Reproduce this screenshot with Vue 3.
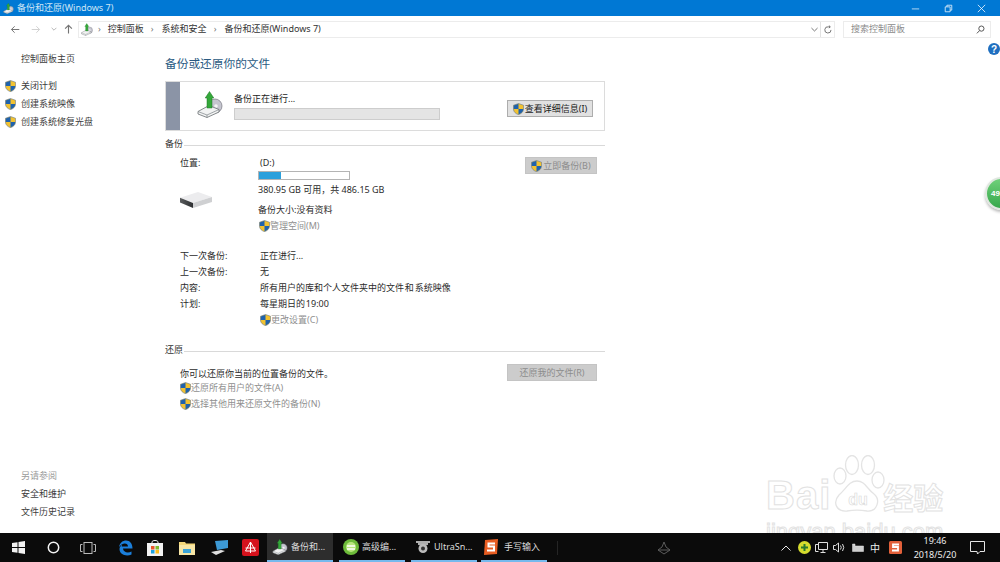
<script setup>
const sideLinks = ['关闭计划', '创建系统映像', '创建系统修复光盘']
const crumbs = ['控制面板', '系统和安全', '备份和还原(Windows 7)']
const scheduleRows = [
  ['下一次备份:', '正在进行...'],
  ['上一次备份:', '无'],
  ['内容:', '所有用户的库和个人文件夹中的文件 和 系统映像'],
  ['计划:', '每星期日的 19:00'],
]
const tasks = [
  { name: '备份和...', icon: 'backup', active: true },
  { name: '高级编...', icon: 'ball' },
  { name: 'UltraSn...', icon: 'drone' },
  { name: '手写输入', icon: 'sogou' },
]
</script>

<template>
  <div class="screen">
    <svg class="defs" width="0" height="0" aria-hidden="true">
      <defs>
        <linearGradient id="driveFront" x1="0" y1="0" x2="1" y2="0">
          <stop offset="0" stop-color="#5a5c5e" />
          <stop offset="1" stop-color="#2e3032" />
        </linearGradient>
      </defs>
      <symbol id="shield" viewBox="0 0 12 13">
        <path d="M6 .5 11.500 2.400V6.600C11.500 9.700 9 11.600 6 12.700 3 11.600 .5 9.700 .5 6.600V2.400Z" fill="#f2c230" stroke="#5b6f8c" stroke-width=".6" />
        <path d="M6 .8V6.500H.8V2.600ZM6 6.500H11.200C11.100 9.500 8.800 11.400 6 12.400Z" fill="#1f62ad" />
      </symbol>
      <symbol id="backup" viewBox="0 0 26 27">
        <ellipse cx="18" cy="15" rx="7" ry="7" fill="#c5c5cf" stroke="#75757f" stroke-width=".7" />
        <circle cx="19" cy="15" r="1.800" fill="#f4f4f4" />
        <path d="M1 20.500 12 14.500 22 18.500V21L10 26.500 1 23Z" fill="#f2f3f3" stroke="#6a6f72" stroke-width=".8" />
        <path d="M1 20.500 10 24 22 18.500M10 24V26.500" fill="none" stroke="#7d8488" stroke-width=".7" />
        <path d="M12.500 .5 16.800 7H15V17H10V7H8.200Z" fill="#34a83a" stroke="#1e7425" stroke-width=".5" />
      </symbol>
    </svg>

    <header class="titlebar">
      <div class="title">
        <svg class="title-icon"><use href="#backup" /></svg>
        <span>备份和还原(Windows 7)</span>
      </div>
      <div class="window-controls">
        <svg width="9" height="9" viewBox="0 0 11 11"><path d="M1 6H10" stroke="#d5e8f7" /></svg>
        <svg width="9" height="9" viewBox="0 0 11 11" fill="none" stroke="#e8f3fb"><path d="M1.500 3.500H7.500V9.500H1.500ZM3.500 3.500V1.500H9.500V7.500H7.500" /></svg>
        <svg width="9" height="9" viewBox="0 0 11 11" fill="none" stroke="#f0f7fc"><path d="M1 1 10 10M10 1 1 10" /></svg>
      </div>
    </header>

    <nav class="navbar">
      <div class="nav-buttons">
        <svg class="n-back" width="10" height="9" viewBox="0 0 14 12" fill="none" stroke="#767676" stroke-width="1.400"><path d="M13 6H2M6.500 1.500 2 6 6.500 10.500" /></svg>
        <svg class="n-fwd" width="10" height="9" viewBox="0 0 14 12" fill="none" stroke="#d2d2d2" stroke-width="1.400"><path d="M1 6H12M7.500 1.500 12 6 7.500 10.500" /></svg>
        <svg class="n-down" width="6" height="4" viewBox="0 0 7 5" fill="none" stroke="#a5a5a5"><path d="M.5 1 3.500 4 6.500 1" /></svg>
        <svg class="n-up" width="9" height="10" viewBox="0 0 12 13" fill="none" stroke="#747474" stroke-width="1.500"><path d="M6 12.500V1.500M1.500 6 6 1.500 10.500 6" /></svg>
      </div>
      <div class="address">
        <svg class="address-icon"><use href="#backup" /></svg>
        <span class="crumb-sep first">›</span>
        <template v-for="(crumb, i) in crumbs" :key="crumb">
          <span class="crumb">{{ crumb }}</span>
          <span v-if="i < crumbs.length - 1" class="crumb-sep">›</span>
        </template>
        <div class="address-tools">
          <svg width="7" height="5" viewBox="0 0 8 5" fill="none" stroke="#666"><path d="M.5 .8 4 4.200 7.500 .8" /></svg>
          <i class="tool-divider"></i>
          <svg width="8" height="9" viewBox="0 0 9 10" fill="none" stroke="#666"><path d="M7.900 5.500A3.500 3.500 0 1 1 5 2H7M5.500 .5 7 2 5.500 3.500" /></svg>
        </div>
      </div>
      <div class="search">
        <span>搜索控制面板</span>
        <svg width="9" height="9" viewBox="0 0 10 10" fill="none" stroke="#555" stroke-width="1.100"><circle cx="6" cy="4" r="2.900" /><path d="M4 6.200 1 9.300" /></svg>
      </div>
    </nav>

    <div class="body">
      <aside class="sidebar">
        <div>
          <div class="side-home">控制面板主页</div>
          <ul class="side-links">
            <li v-for="link in sideLinks" :key="link">
              <svg class="shield"><use href="#shield" /></svg>{{ link }}
            </li>
          </ul>
        </div>
        <div class="see-also">
          <div class="see-title">另请参阅</div>
          <div>安全和维护</div>
          <div>文件历史记录</div>
        </div>
      </aside>

      <main class="main">
        <h1>备份或还原你的文件</h1>

        <section class="status">
          <div class="stripe"></div>
          <svg class="status-icon"><use href="#backup" /></svg>
          <div class="status-text">
            <div class="status-line">备份正在进行...</div>
            <div class="status-bar"></div>
          </div>
          <button class="btn btn-on">
            <svg class="shield"><use href="#shield" /></svg>查看详细信息(I)
          </button>
        </section>

        <div class="group-head"><span>备份</span><i></i></div>

        <div class="location">
          <div class="loc-left">
            <div>位置:</div>
            <svg class="drive" width="32" height="18" viewBox="0 0 32 18">
              <path d="M0 6.700 18 1 32 6 13 12Z" fill="#ececee" />
              <path d="M0 6.700 13 12V17L0 11.500Z" fill="url(#driveFront)" />
              <path d="M13 12 32 6V11L13 17Z" fill="#cfd0d2" />
            </svg>
          </div>
          <div class="loc-mid">
            <div class="drive-name">(D:)</div>
            <div class="usage"><div class="usage-fill" :style="{ width: '24%' }"></div></div>
            <div>380.95 GB 可用，共 486.15 GB</div>
            <div class="size-line">备份大小:没有资料</div>
            <div class="link manage"><svg class="shield"><use href="#shield" /></svg>管理空间(M)</div>
          </div>
          <button class="btn btn-off btn-now">
            <svg class="shield"><use href="#shield" /></svg>立即备份(B)
          </button>
        </div>

        <dl class="schedule">
          <template v-for="row in scheduleRows" :key="row[0]">
            <dt>{{ row[0] }}</dt>
            <dd>{{ row[1] }}</dd>
          </template>
          <dt></dt>
          <dd class="link"><svg class="shield"><use href="#shield" /></svg>更改设置(C)</dd>
        </dl>

        <div class="group-head restore-head"><span>还原</span><i></i></div>

        <div class="restore">
          <div>
            <div class="restore-note">你可以还原你当前的位置备份的文件。</div>
            <div class="link"><svg class="shield"><use href="#shield" /></svg>还原所有用户的文件(A)</div>
            <div class="link"><svg class="shield"><use href="#shield" /></svg>选择其他用来还原文件的备份(N)</div>
          </div>
          <button class="btn btn-off btn-restore">还原我的文件(R)</button>
        </div>
      </main>

      <div class="watermark">
        <div class="wm-logo">
          <span class="wm-bai">Bai</span>
          <svg class="wm-paw" width="56" height="58" viewBox="0 0 56 58" fill="#fff" stroke="#e4e4e4" stroke-width="1.300">
            <ellipse cx="11" cy="21" rx="6" ry="8" />
            <ellipse cx="23" cy="10" rx="6.500" ry="9.500" />
            <ellipse cx="39" cy="10" rx="6.500" ry="9.500" />
            <ellipse cx="49" cy="25" rx="6" ry="8" />
            <path d="M28 26C36 26 38 34 45 39 52 45 48 57 38 56 32 55 24 55 18 56 8 57 3 48 10 40 17 34 20 26 28 26Z" />
            <text x="29" y="50" text-anchor="middle" class="wm-du">du</text>
          </svg>
          <span class="wm-cn">经验</span>
        </div>
        <div class="wm-url">jingyan.baidu.com</div>
      </div>
    </div>

    <footer class="taskbar">
      <div class="sys-icons">
        <svg class="i-win" width="13" height="13" viewBox="0 0 13 13" fill="#f2f2f2"><path d="M0 2 5.500 1.200V6H0ZM6.500 1 13 0V6H6.500ZM0 7H5.500V11.800L0 11ZM6.500 7H13V13L6.500 12Z" /></svg>
        <svg class="i-cortana" width="13" height="13" viewBox="0 0 13 13" fill="none" stroke="#f2f2f2" stroke-width="1.500"><circle cx="6.500" cy="6.500" r="5.200" /></svg>
        <svg class="i-view" width="16" height="12" viewBox="0 0 16 12" fill="none" stroke="#bbb"><rect x="4" y=".5" width="8" height="11" /><path d="M2.500 2.500H.5V9.500H2.500M13.500 2.500H15.500V9.500H13.500" /></svg>
        <svg class="i-edge" width="15" height="16" viewBox="0 0 15 16"><path d="M1 7C2 2.500 5 .5 8 .5 12 .5 14.500 3.500 14.500 8.500H5C5.200 12 9.500 13.500 13.500 11.500V14.500C8.500 16.800 1.500 14.800 1.500 9 1.500 7 3 5.500 4.500 4.500 4 5.200 3.800 5.800 3.700 6.500H10C10 3 5 1.800 1 7Z" fill="#1b7fdb" /></svg>
        <svg class="i-store" width="16" height="17" viewBox="0 0 16 17"><path d="M5 5V3C5 1 11 1 11 3V5" fill="none" stroke="#f2f2f2" /><rect y="4" width="16" height="13" fill="#f2f2f2" /><rect x="4" y="7" width="3.500" height="3.500" fill="#e8542a" /><rect x="8.500" y="7" width="3.500" height="3.500" fill="#7fba2c" /><rect x="4" y="11" width="3.500" height="3.500" fill="#1ba1e2" /><rect x="8.500" y="11" width="3.500" height="3.500" fill="#fbbc1c" /></svg>
        <svg class="i-folder" width="16" height="14" viewBox="0 0 16 14"><path d="M0 1H6L7 2.500H16V14H0Z" fill="#f3d77a" /><rect y="4" width="16" height="10" fill="#f7e6a6" /><rect x="4" y="8" width="8" height="4" fill="#3ba4d8" /></svg>
        <svg class="i-pc" width="18" height="15" viewBox="0 0 18 15"><path d="M4 1 17 0V8L6 10Z" fill="#3d9ad6" /><path d="M0 12 10 10 14 11 5 15Z" fill="#e0e0e0" /></svg>
        <svg class="i-red" width="17" height="17" viewBox="0 0 17 17"><rect width="17" height="17" rx="2" fill="#d5121d" /><path d="M8.500 3 13.500 12H3.500ZM8.500 3V14M3.500 9H13.500" fill="none" stroke="#fff" /></svg>
      </div>

      <div class="tasks">
        <div v-for="task in tasks" :key="task.name" class="task" :class="{ active: task.active, last: task.icon === 'sogou' }">
          <svg v-if="task.icon === 'backup'" class="task-icon"><use href="#backup" /></svg>
          <svg v-else-if="task.icon === 'ball'" class="task-icon" viewBox="0 0 16 16"><circle cx="8" cy="8" r="8" fill="#6dbb3a" /><circle cx="8" cy="8" r="5" fill="#b9e67f" /><path d="M4 7H12M4 10H12" stroke="#fff" stroke-width="1.400" /></svg>
          <svg v-else-if="task.icon === 'drone'" class="task-icon" viewBox="0 0 16 16"><path d="M1 3H15M3 5H13" stroke="#e6e6e6" stroke-width="1.400" /><circle cx="8" cy="9.500" r="4.500" fill="#bcbcbc" /><circle cx="8" cy="9.500" r="2" fill="#333" /></svg>
          <svg v-else class="task-icon" viewBox="0 0 16 16"><path d="M2 1 15 0 14 15 1 16Z" fill="#e85d22" /><path d="M12 4.500H5.500V7.500H11V11.500H4" fill="none" stroke="#fff" stroke-width="2" /></svg>
          <span>{{ task.name }}</span>
        </div>
      </div>

      <i class="tray-mark"></i>
      <svg class="faint" width="14" height="14" viewBox="0 0 14 14" fill="none" stroke="#5c5c5c"><path d="M7 1 9 6 13 9 7 13 1 9 5 6ZM1 9H13" /></svg>

      <div class="tray">
        <svg class="t-up" width="10" height="6" viewBox="0 0 10 6" fill="none" stroke="#e6e6e6"><path d="M.5 5.500 5 1 9.500 5.500" /></svg>
        <svg class="t-green" width="13" height="13" viewBox="0 0 13 13"><circle cx="6.500" cy="6.500" r="6.500" fill="#d6dd2e" /><path d="M6.500 3V10M3 6.500H10" stroke="#2b7a2f" stroke-width="2" /></svg>
        <svg class="t-net" width="13" height="12" viewBox="0 0 13 12" fill="none" stroke="#e0e0e0"><path d="M3.500 .5H12.500V7.500H3.500ZM.5 2.500H3.500M.5 2.500V9.500H3.500M8 7.500V10.500M5.500 10.500H10.500" /></svg>
        <svg class="t-sound" width="13" height="11" viewBox="0 0 13 11" fill="none" stroke="#dcdcdc"><path d="M.5 3.500H2.500L5.500 1V10L2.500 7.500H.5ZM7.500 3.500Q9 5.500 7.500 7.500M9.500 2Q12 5.500 9.500 9" /></svg>
        <svg class="t-bat" width="13" height="9" viewBox="0 0 13 9"><path d="M1.500 1H4V3H12.500V8.500H1.500Z" fill="#cfcfcf" stroke="#e6e6e6" stroke-width=".5" /></svg>
        <span class="t-ime">中</span>
        <svg class="t-s" width="13" height="13" viewBox="0 0 13 13"><rect width="13" height="13" rx="1.500" fill="#e2603a" /><path d="M10 3.500H4V6H9V9.500H3" fill="none" stroke="#fff" stroke-width="1.800" /></svg>
        <div class="clock"><div>19:46</div><div>2018/5/20</div></div>
        <svg class="t-note" width="15" height="14" viewBox="0 0 15 14" fill="none" stroke="#e6e6e6"><path d="M.5 .5H14.500V10.500H10L7.500 13 7 10.500H.5Z" /></svg>
      </div>
    </footer>

    <svg class="help" width="12" height="12" viewBox="0 0 12 12"><circle cx="6" cy="6" r="6" fill="#1f6fc0" /><text x="6" y="9.500" text-anchor="middle" class="help-q">?</text></svg>

    <div class="float-badge"><span>49</span></div>
  </div>
</template>

<style>
html, body { margin: 0; background: #fff; }
</style>

<style scoped>
.screen {
  position: relative;
  width: 1000px;
  height: 562px;
  overflow: hidden;
  display: flex;
  flex-direction: column;
  background: #fff;
  color: #2b2b2b;
  font: 9px/16px "Noto Sans", "Noto Sans CJK SC", sans-serif;
}
.defs { position: absolute; }
.titlebar {
  height: 16px;
  flex: none;
  display: flex;
  justify-content: space-between;
  align-items: center;
  background: #0078d4;
  color: #cfe6f6;
}
.title { display: flex; align-items: center; gap: 3px; padding-left: 3px; }
.title-icon { width: 11px; height: 11px; }
.window-controls { display: flex; gap: 24px; padding-right: 14px; }
.navbar {
  height: 25px;
  flex: none;
  display: flex;
  align-items: center;
  padding-top: 1px;
  box-sizing: border-box;
}
.nav-buttons { width: 78px; display: flex; align-items: center; padding-left: 10px; box-sizing: border-box; }
.n-fwd { margin-left: 11px; }
.n-down { margin-left: 10px; }
.n-up { margin-left: 7px; }
.address {
  width: 757px;
  height: 17px;
  box-sizing: border-box;
  border: 1px solid #ececec;
  display: flex;
  align-items: center;
  color: #333;
  padding-left: 2px;
}
.address-icon { width: 12px; height: 13px; }
.crumb-sep { margin: 0 8px 0 7px; color: #777; }
.crumb-sep.first { margin: 0 7px 0 5px; }
.address-tools { margin-left: auto; display: flex; align-items: center; padding-right: 2px; }
.tool-divider { width: 1px; height: 15px; background: #e2e2e2; margin: 0 3px 0 2px; }
.search {
  width: 148px;
  height: 17px;
  box-sizing: border-box;
  margin-left: 8px;
  border: 1px solid #ececec;
  display: flex;
  align-items: center;
  justify-content: space-between;
  padding: 0 5px 0 7px;
  color: #8a8a8a;
}
.body { position: relative; overflow: hidden; flex: 1; display: flex; min-height: 0; }
.sidebar {
  width: 165px;
  flex: none;
  box-sizing: border-box;
  padding: 9px 0 12px 5px;
  display: flex;
  flex-direction: column;
  justify-content: space-between;
  color: #3c3c3c;
  line-height: 18px;
}
.side-home { padding-left: 16px; }
.side-links { list-style: none; margin: 9px 0 0; padding: 0; }
.side-links li { display: flex; align-items: center; gap: 5px; }
.shield { width: 11px; height: 12px; flex: none; }
.see-also { padding-left: 16px; }
.see-title { color: #9a9a9a; }
.main { width: 440px; padding-top: 12px; }
h1 { margin: 0 0 8px; font-size: 11.700px; line-height: 20px; font-weight: 400; color: #2a5a82; }
.status {
  height: 50px;
  box-sizing: border-box;
  border: 1px solid #dcdcdc;
  display: flex;
}
.stripe { width: 14px; background: #8b94a6; flex: none; }
.status-icon { width: 26px; height: 27px; margin: 9px 11px 0 17px; flex: none; }
.status-text { width: 273px; padding-top: 9px; }
.status-bar { width: 204px; height: 10px; margin-top: 1px; border: 1px solid #cdcdcd; background: #e4e4e4; }
.status-line { color: #222; }
.btn {
  font: inherit;
  line-height: 15px;
  height: 17px;
  padding: 0;
  display: flex;
  align-items: center;
  justify-content: center;
  gap: 1px;
  box-sizing: border-box;
}
.btn-on { width: 86px; margin-top: 18px; background: #e1e1e1; border: 1px solid #adadad; color: #222; }
.btn-off { background: #cccccc; border: 1px solid #c4c4c4; color: #8c8c8c; }
.group-head { display: flex; align-items: center; height: 14px; margin-top: 5px; color: #333; gap: 1px; }
.group-head span { margin-top: 2px; }
.group-head i { flex: 1; height: 1px; background: #d9d9d9; margin-top: 4px; }
.location { margin-top: 5px; padding-left: 15px; display: flex; }
.loc-left { width: 78px; flex: none; }
.drive { display: block; margin: 20px 0 0; }
.loc-mid { width: 267px; flex: none; }
.drive-name { padding-left: 2px; }
.usage { width: 90px; height: 7px; border: 1px solid #b4b4b4; margin-bottom: 2px; }
.usage-fill { height: 100%; background: #2ba0dc; }
.size-line { margin-top: 4px; }
.link { display: flex; align-items: center; color: #8f8f8f; }
.manage { padding-left: 1px; }
.btn-now { width: 72px; margin-top: 2px; }
.schedule {
  margin: 14px 0 0;
  padding-left: 15px;
  display: grid;
  grid-template-columns: 80px 1fr;
  word-spacing: -1.500px;
}
dd { margin: 0; }
dt { font-weight: 400; }
.restore-head { margin-top: 14px; }
.restore { margin-top: 10px; padding: 0 8px 0 15px; display: flex; justify-content: space-between; align-items: flex-start; }
.restore-note { height: 14px; }
.btn-restore { width: 90px; margin-top: -2px; }
.taskbar {
  height: 29px;
  flex: none;
  background: #0b0b0b;
  display: flex;
  align-items: center;
  color: #dcdcdc;
}
.sys-icons { width: 267px; flex: none; display: flex; align-items: center; padding-left: 12px; box-sizing: border-box; }
.i-cortana { margin-left: 22px; }
.i-view { margin-left: 20px; }
.i-edge { margin-left: 22px; }
.i-store { margin-left: 14px; }
.i-folder { margin-left: 16px; }
.i-pc { margin-left: 16px; }
.i-red { margin-left: 13px; }
.tasks { display: flex; gap: 6px; height: 100%; }
.task {
  width: 66px;
  height: 100%;
  box-sizing: border-box;
  border-bottom: 2px solid #76b9ed;
  display: flex;
  align-items: center;
  gap: 3px;
  padding-left: 4px;
  white-space: nowrap;
  overflow: hidden;
}
.task.active { background: #2d2d2d; padding-left: 5px; }
.task.last { margin-left: -2px; padding-left: 2px; gap: 5px; }
.task-icon { width: 16px; height: 16px; flex: none; }
.tray-mark { width: 1px; height: 14px; background: #252525; margin-left: 10px; }
.faint { margin-left: 99px; }
.tray { margin-left: auto; display: flex; align-items: center; height: 100%; color: #ededed; }
.t-up { margin-right: 7px; }
.t-green { margin-right: 4px; }
.t-net { margin-right: 5px; }
.t-sound { margin-right: 5px; }
.t-bat { margin-right: 6px; }
.t-ime { font-size: 10px; margin-right: 9px; }
.t-s { margin-right: 2px; }
.clock { width: 62px; text-align: center; font-size: 9px; line-height: 14px; margin-right: 4px; }
.t-note { margin-right: 15px; }
.help { position: absolute; left: 988px; top: 43px; }
.help-q { font: 700 10px "Liberation Sans", sans-serif; fill: #fff; }
.float-badge {
  position: absolute;
  left: 985px;
  top: 177px;
  width: 33px;
  height: 33px;
  box-sizing: border-box;
  border-radius: 50%;
  border: 2px solid #dfe7df;
  background: linear-gradient(#6fd07a, #36a84b);
  box-shadow: 0 2px 3px #bbb;
  color: #fff;
  font: 700 8px/29px "Liberation Sans", sans-serif;
  padding-left: 4px;
}
.watermark { position: absolute; left: 766px; top: 414px; width: 190px; height: 78px; overflow: hidden; }
.wm-logo { display: flex; align-items: flex-end; height: 58px; }
.wm-bai, .wm-cn {
  color: #fff;
  -webkit-text-stroke: 1px #e2e2e2;
  line-height: 36px;
}
.wm-bai { font: 700 40px/36px "Liberation Sans", sans-serif; letter-spacing: 1px; }
.wm-paw { margin-left: -2px; flex: none; }
.wm-du { font: 700 16px "Liberation Sans", sans-serif; fill: #fff; stroke: #d8d8d8; stroke-width: .6; }
.wm-cn { font: 700 30px/34px "Noto Sans CJK SC", sans-serif; margin-left: -2px; }
.wm-url {
  margin-top: 5px;
  color: #fff;
  -webkit-text-stroke: 1px #e2e2e2;
  font: 400 22px/28px "Liberation Sans", sans-serif;
  white-space: nowrap;
}
</style>
